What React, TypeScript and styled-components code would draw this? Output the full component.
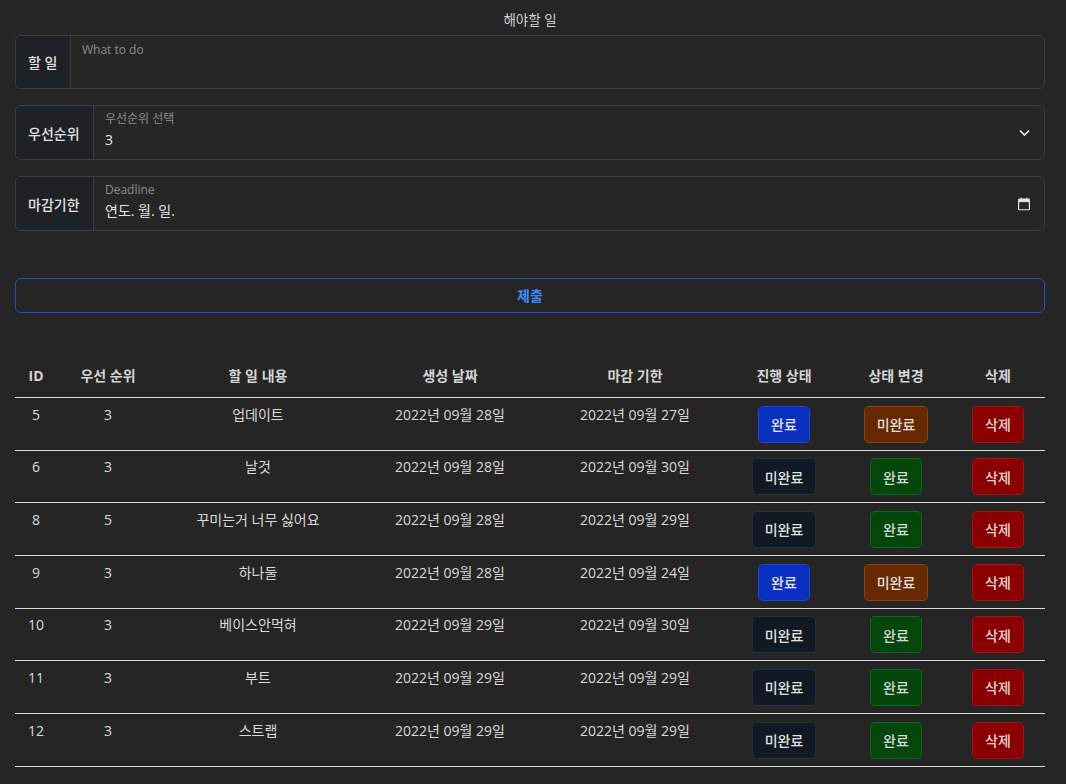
import React from "react";
import styled, { createGlobalStyle } from "styled-components";

const Global = createGlobalStyle`
  html, body { margin: 0; padding: 0; background: #252525; }
  body {
    font-family: "Open Sans", "Noto Sans CJK KR", "Noto Sans", sans-serif;
    color: #d9d9d9;
    -webkit-font-smoothing: antialiased;
  }
`;

const Page = styled.div`
  width: 1030px;
  padding: 10px 21px 16px 15px;
  box-sizing: content-box;
`;

const Title = styled.div`
  text-align: center;
  font-size: 13.5px;
  line-height: 20px;
  color: #cfcfcf;
  margin-bottom: 5px;
`;

const Form = styled.div`
  display: flex;
  flex-direction: column;
  gap: 16px;
`;

const Group = styled.div<{ $h: number }>`
  display: flex;
  height: ${(p) => p.$h}px;
  box-sizing: border-box;
  border: 1px solid #3a3c3e;
  border-radius: 6px;
  overflow: hidden;
`;

const GroupLabel = styled.div<{ $w: number }>`
  width: ${(p) => p.$w}px;
  flex: none;
  box-sizing: border-box;
  display: flex;
  align-items: center;
  padding-left: 12px;
  background: #1e2125;
  border-right: 1px solid #3a3c3e;
  font-size: 14px;
  font-weight: 500;
  color: #e2e2e2;
`;

const Field = styled.div<{ $pad: number }>`
  flex: 1;
  position: relative;
  display: flex;
  flex-direction: column;
  justify-content: flex-start;
  padding: ${(p) => p.$pad}px 11px 0;
  background: #262626;
`;

const FloatLabel = styled.div`
  font-size: 12px;
  line-height: 16px;
  color: #8c8c8c;
`;

const Value = styled.div`
  margin-top: 3px;
  font-size: 14px;
  line-height: 20px;
  color: #e4e4e4;
`;

const TrailIcon = styled.div`
  position: absolute;
  right: 14px;
  top: 50%;
  transform: translateY(-50%);
  display: flex;
`;

const Submit = styled.button`
  margin-top: 47px;
  width: 100%;
  height: 35px;
  padding: 0;
  border: 1px solid #1f4fc2;
  border-radius: 6px;
  background: transparent;
  color: #3f8cfc;
  font-family: inherit;
  font-size: 14px;
  font-weight: 600;
  line-height: 20px;
  cursor: pointer;
`;

const Table = styled.table`
  margin-top: 43px;
  width: 1030px;
  table-layout: fixed;
  border-collapse: collapse;
`;

const Col = styled.col<{ $w: number }>`
  width: ${(p) => p.$w}px;
`;

const Th = styled.th`
  vertical-align: bottom;
  text-align: center;
  font-size: 14px;
  font-weight: 700;
  line-height: 24px;
  color: #d4d4d4;
  padding: 8px 0 9px;
  border-bottom: 1px solid #dcdcdc;
  white-space: nowrap;
`;

const Td = styled.td`
  vertical-align: top;
  text-align: center;
  font-size: 14px;
  line-height: 18px;
  color: #dadada;
  padding: 7.5px 0 7.2px;
  border-bottom: 1px solid #dcdcdc;
  white-space: nowrap;
`;

type Tone = "blue" | "dark" | "green" | "brown" | "red";

const tones: Record<Tone, { bg: string; bd: string; fg: string }> = {
  blue: { bg: "#0a30c2", bd: "#1c44d6", fg: "#e6e6e6" },
  dark: { bg: "#111a24", bd: "#26303b", fg: "#e0e0e0" },
  green: { bg: "#03470d", bd: "#0b6a1c", fg: "#d8d8d8" },
  brown: { bg: "#682800", bd: "#8a4311", fg: "#e0e0e0" },
  red: { bg: "#8a0000", bd: "#a5101a", fg: "#e4d8d8" },
};

const Btn = styled.button<{ $tone: Tone }>`
  height: 37px;
  padding: 0 12px;
  border-radius: 5px;
  border: 1px solid ${(p) => tones[p.$tone].bd};
  background: ${(p) => tones[p.$tone].bg};
  color: ${(p) => tones[p.$tone].fg};
  font-family: inherit;
  font-size: 14px;
  font-weight: 500;
  cursor: pointer;
`;

type Todo = { id: number; pr: number; text: string; made: string; due: string; done: boolean };

const rows: Todo[] = [
  { id: 5, pr: 3, text: "업데이트", made: "2022년 09월 28일", due: "2022년 09월 27일", done: true },
  { id: 6, pr: 3, text: "날것", made: "2022년 09월 28일", due: "2022년 09월 30일", done: false },
  { id: 8, pr: 5, text: "꾸미는거 너무 싫어요", made: "2022년 09월 28일", due: "2022년 09월 29일", done: false },
  { id: 9, pr: 3, text: "하나둘", made: "2022년 09월 28일", due: "2022년 09월 24일", done: true },
  { id: 10, pr: 3, text: "베이스안먹혀", made: "2022년 09월 29일", due: "2022년 09월 30일", done: false },
  { id: 11, pr: 3, text: "부트", made: "2022년 09월 29일", due: "2022년 09월 29일", done: false },
  { id: 12, pr: 3, text: "스트랩", made: "2022년 09월 29일", due: "2022년 09월 29일", done: false },
];

const widths = [42, 102, 198, 186, 184, 114, 110, 94];
const heads = ["ID", "우선 순위", "할 일 내용", "생성 날짜", "마감 기한", "진행 상태", "상태 변경", "삭제"];

const Chevron = () => (
  <svg width="11" height="7" viewBox="0 0 11 7">
    <path d="M1 1l4.5 4.5L10 1" fill="none" stroke="#e8e8e8" strokeWidth="1.6" />
  </svg>
);

const Calendar = () => (
  <svg width="12" height="13" viewBox="0 0 12 13">
    <rect x="0.6" y="1.6" width="10.8" height="10.8" fill="none" stroke="#e4e4e4" strokeWidth="1.2" rx="1" />
    <rect x="0.6" y="1.6" width="10.8" height="3" fill="#e4e4e4" />
    <rect x="2.5" y="0" width="1.2" height="2.5" fill="#e4e4e4" />
    <rect x="8.3" y="0" width="1.2" height="2.5" fill="#e4e4e4" />
  </svg>
);

export default function App() {
  return (
    <>
      <Global />
      <Page>
        <Title>해야할 일</Title>
        <Form>
          <Group $h={54}>
            <GroupLabel $w={55}>할 일</GroupLabel>
            <Field $pad={6}>
              <FloatLabel>What to do</FloatLabel>
            </Field>
          </Group>
          <Group $h={55}>
            <GroupLabel $w={78}>우선순위</GroupLabel>
            <Field $pad={5}>
              <FloatLabel>우선순위 선택</FloatLabel>
              <Value>3</Value>
              <TrailIcon>
                <Chevron />
              </TrailIcon>
            </Field>
          </Group>
          <Group $h={55}>
            <GroupLabel $w={78}>마감기한</GroupLabel>
            <Field $pad={5}>
              <FloatLabel>Deadline</FloatLabel>
              <Value>연도. 월. 일.</Value>
              <TrailIcon>
                <Calendar />
              </TrailIcon>
            </Field>
          </Group>
        </Form>
        <Submit>제출</Submit>
        <Table>
          <colgroup>
            {widths.map((w, i) => (
              <Col key={i} $w={w} />
            ))}
          </colgroup>
          <thead>
            <tr>
              {heads.map((h) => (
                <Th key={h}>{h}</Th>
              ))}
            </tr>
          </thead>
          <tbody>
            {rows.map((r) => (
              <tr key={r.id}>
                <Td>{r.id}</Td>
                <Td>{r.pr}</Td>
                <Td>{r.text}</Td>
                <Td>{r.made}</Td>
                <Td>{r.due}</Td>
                <Td>
                  <Btn $tone={r.done ? "blue" : "dark"}>{r.done ? "완료" : "미완료"}</Btn>
                </Td>
                <Td>
                  <Btn $tone={r.done ? "brown" : "green"}>{r.done ? "미완료" : "완료"}</Btn>
                </Td>
                <Td>
                  <Btn $tone="red">삭제</Btn>
                </Td>
              </tr>
            ))}
          </tbody>
        </Table>
      </Page>
    </>
  );
}
